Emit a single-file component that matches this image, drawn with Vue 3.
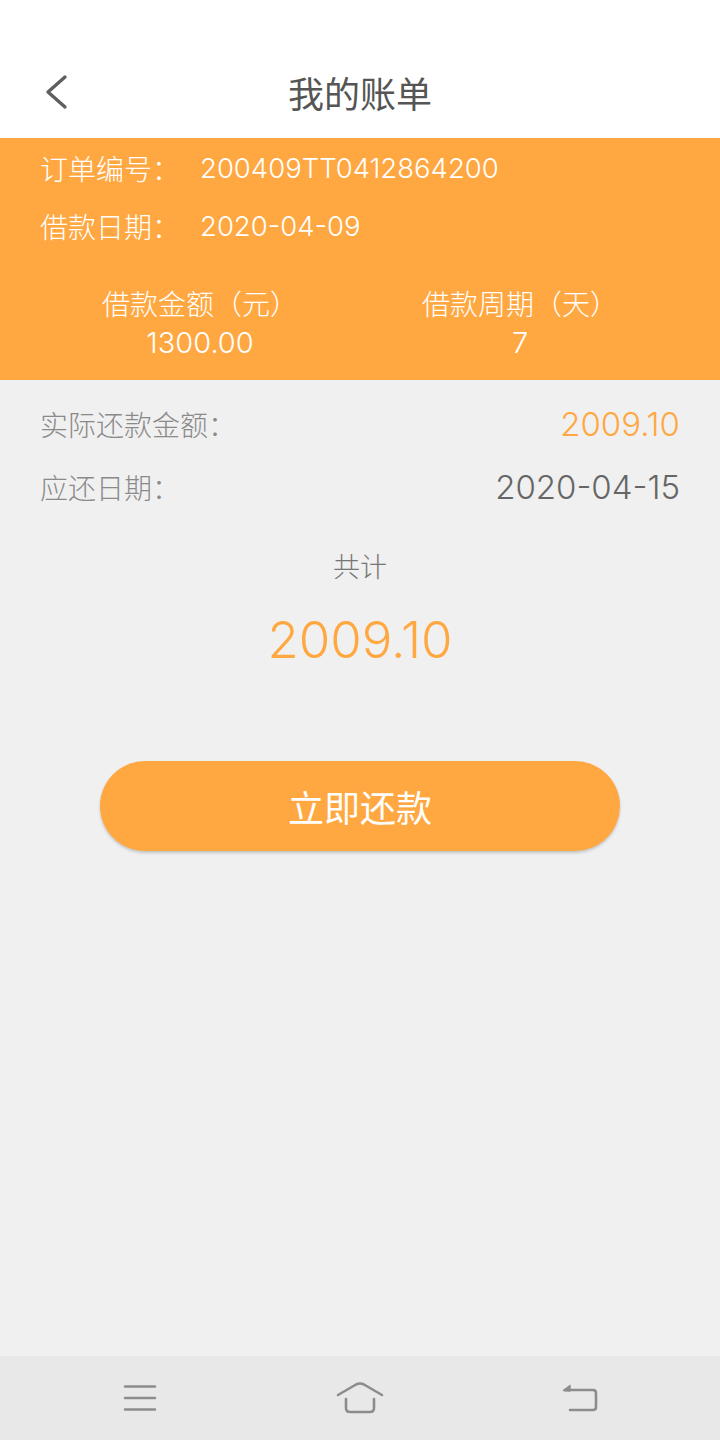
<template>
  <div class="page">
    <header class="nav">
      <svg class="back" width="24" height="36" viewBox="0 0 24 36">
        <path d="M21 3 L4 18 L21 33" fill="none" stroke="#5f5f5f" stroke-width="3.4" stroke-linecap="round" stroke-linejoin="round" />
      </svg>
      <h1>我的账单</h1>
    </header>

    <section class="summary">
      <div class="info-row">
        <span class="info-label">订单编号：</span>
        <span class="info-num">200409TT0412864200</span>
      </div>
      <div class="info-row">
        <span class="info-label">借款日期：</span>
        <span class="info-num">2020-04-09</span>
      </div>
      <div class="stats">
        <div class="stat">
          <div class="stat-label">借款金额（元）</div>
          <div class="stat-value">1300.00</div>
        </div>
        <div class="stat">
          <div class="stat-label">借款周期（天）</div>
          <div class="stat-value">7</div>
        </div>
      </div>
    </section>

    <main class="detail">
      <div class="line">
        <span class="line-label">实际还款金额：</span>
        <span class="line-value orange">2009.10</span>
      </div>
      <div class="line second">
        <span class="line-label">应还日期：</span>
        <span class="line-value">2020-04-15</span>
      </div>
      <div class="total-label">共计</div>
      <div class="total">2009.10</div>
      <button class="pay">立即还款</button>
    </main>

    <footer class="softkeys">
      <svg width="36" height="28" viewBox="0 0 36 28" fill="none" stroke="#8c8c8c" stroke-width="2.6" stroke-linecap="round">
        <path d="M3 2.5H33M3 14H33M3 25.5H33" />
      </svg>
      <svg width="50" height="34" viewBox="0 0 50 34" fill="none" stroke="#8c8c8c" stroke-width="2.6" stroke-linecap="round" stroke-linejoin="round">
        <path d="M3 14 L21 3.5 Q25 1.5 29 3.5 L47 14" />
        <path d="M11 18 V27 Q11 31 15 31 H35 Q39 31 39 27 V18" />
      </svg>
      <svg width="38" height="30" viewBox="0 0 38 30" fill="none" stroke="#8c8c8c" stroke-width="2.6" stroke-linecap="round" stroke-linejoin="round">
        <path d="M4 7 H32 Q35 7 35 10 V24 Q35 27 32 27 H9" />
        <path d="M2.5 7.5 L9 2.5 V8 Z" fill="#8c8c8c" stroke-width="1.4" />
      </svg>
    </footer>
  </div>
</template>

<script setup></script>

<style>
body {
  margin: 0;
}
</style>

<style scoped>
.page {
  display: flex;
  flex-direction: column;
  height: 1440px;
  background: #f0f0f0;
  font-family: "Noto Sans CJK SC", Roboto, sans-serif;
  font-weight: 300;
}

.nav {
  position: relative;
  height: 138px;
  box-sizing: border-box;
  background: #fff;
}

.back {
  position: absolute;
  left: 44px;
  top: 74px;
}

.nav h1 {
  margin: 0;
  padding-top: 68px;
  font-size: 36px;
  line-height: 48px;
  font-weight: 400;
  color: #555;
  text-align: center;
}

.summary {
  height: 242px;
  box-sizing: border-box;
  padding: 1px 40px 0;
  background: #ffa842;
  color: #fff;
}

.info-row {
  display: flex;
  height: 58px;
  align-items: center;
  font-size: 28px;
}

.info-label {
  width: 160px;
}

.info-num {
  font-family: Inter, sans-serif;
  font-size: 27.5px;
}

.stats {
  display: grid;
  grid-template-columns: 320px 320px;
  margin-top: 28px;
  text-align: center;
}

.stat-label {
  font-size: 28px;
  line-height: 40px;
}

.stat-value {
  margin-top: 1px;
  font-family: Inter, sans-serif;
  font-size: 29px;
  line-height: 38px;
}

.detail {
  flex: 1;
  padding: 12px 40px 0;
  display: flex;
  flex-direction: column;
}

.line {
  display: flex;
  justify-content: space-between;
  align-items: center;
  height: 63px;
}

.line-label {
  font-size: 28px;
  color: #8a8a8a;
}

.line-value {
  font-family: Inter, sans-serif;
  font-size: 33px;
  color: #666;
}

.line-value.orange {
  color: #ffa842;
}

.total-label {
  margin-top: 28px;
  text-align: center;
  font-size: 27px;
  line-height: 40px;
  color: #777;
}

.total {
  margin-top: 21px;
  text-align: center;
  font-family: Inter, sans-serif;
  font-size: 51px;
  line-height: 66px;
  color: #ffa842;
}

.pay {
  align-self: center;
  width: 520px;
  height: 90px;
  margin-top: 88px;
  border: none;
  border-radius: 45px;
  background: #ffa842;
  box-shadow: 0 2px 3px rgba(0, 0, 0, 0.18);
  color: #fff;
  font-family: inherit;
  font-size: 36px;
  font-weight: 400;
}

.softkeys {
  display: grid;
  grid-template-columns: repeat(3, 220px);
  justify-items: center;
  align-items: center;
  height: 84px;
  padding: 0 30px;
  background: #e8e8e8;
}
</style>
